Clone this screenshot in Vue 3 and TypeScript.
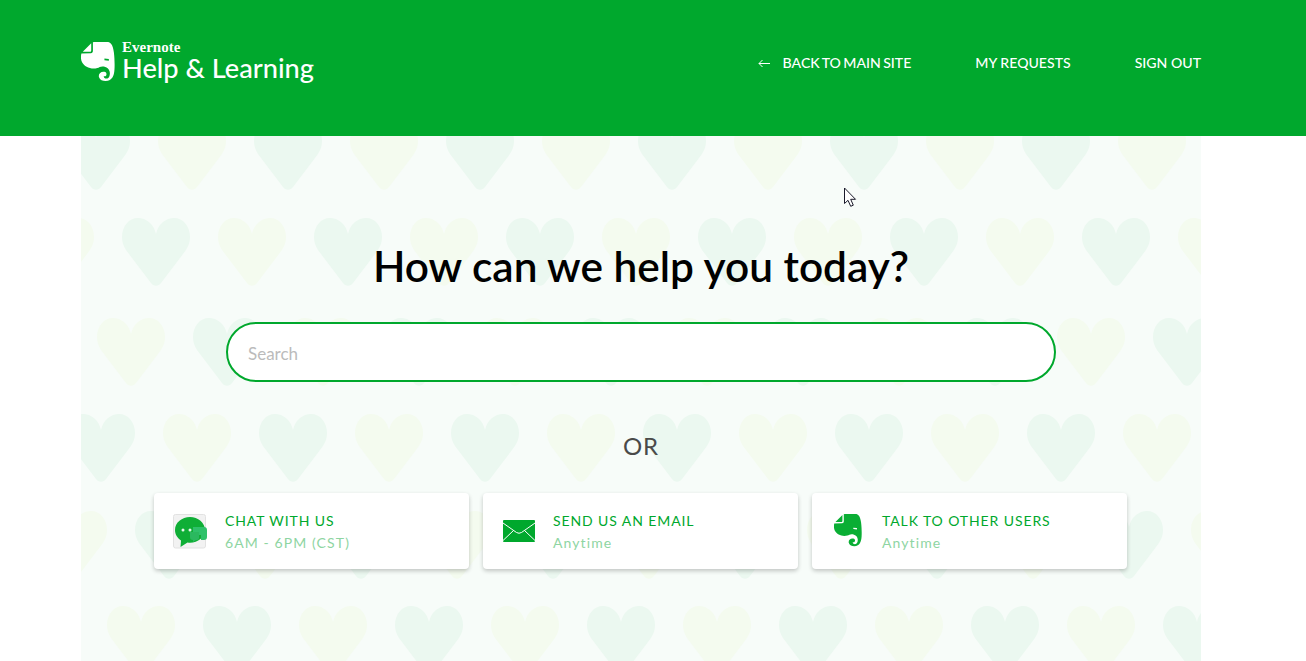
<template>
  <div class="page">
    <header class="top">
      <a class="brand" href="#">
        <svg class="elephant" viewBox="15 18 100 118" width="34" height="40">
          <path fill-rule="evenodd" :d="elephantPath" fill="#fff" />
        </svg>
        <span class="brand-text">
          <span class="brand-small">Evernote</span>
          <span class="brand-big">Help &amp; Learning</span>
        </span>
      </a>
      <nav class="nav">
        <a href="#" class="back">
          <svg width="12" height="9" viewBox="0 0 12 9" fill="none" stroke="#fff" stroke-width="1">
            <path d="M12 4.5H1M4.5 1 1 4.5 4.5 8" />
          </svg>
          Back to main site
        </a>
        <a href="#">My requests</a>
        <a href="#">Sign out</a>
      </nav>
    </header>

    <main class="hero">
      <svg class="hearts" width="1120" height="525" viewBox="81 136 1120 525">
        <path
          v-for="h in hearts"
          :key="h.key"
          :d="heartPath"
          :fill="h.color"
          :transform="`translate(${h.x - 34} ${h.y})`"
        />
      </svg>
      <h1>How can we help you today?</h1>
      <input class="search" type="text" placeholder="Search" />
      <p class="or">OR</p>
      <div class="cards">
        <a v-for="c in cards" :key="c.title" class="card" href="#">
          <span class="icon" :class="c.icon">
            <svg v-if="c.icon === 'chat'" width="35" height="35" viewBox="0 0 35 35">
              <rect x="0.5" y="0.5" width="32" height="33.5" rx="2" fill="#f2f2f2" stroke="#e2e2e2" />
              <path d="M17 3C9 3 2 8.500 2 16c0 4.500 2.500 8 6 10.500L7.500 33l7-4.500c1 .2 1.700.2 2.500.2 8 0 15-5.500 15-12.700S25 3 17 3z" fill="#0fae36" />
              <circle cx="10" cy="16" r="1.500" fill="#e8f7ec" />
              <circle cx="17" cy="16" r="1.500" fill="#e8f7ec" />
              <path d="M20 13h11a3 3 0 0 1 3 3v7a3 3 0 0 1-3 3h-3v-5h-8z" fill="#2fc16a" />
              <path d="M17 18h9v6a2 2 0 0 1-2 2h-1l-3 2v-2a3 3 0 0 1-3-3z" fill="#2bb85f" />
            </svg>
            <svg v-else-if="c.icon === 'mail'" width="32" height="22" viewBox="0 0 32 22">
              <rect width="32" height="22" rx="1" fill="#00a82d" />
              <path d="M0 3 13.500 12.500Q16 14 18.500 12.500L32 3M0 20.500 10.500 10.500M32 20.500 21.500 10.500" fill="none" stroke="#fff" stroke-width="1" />
            </svg>
            <svg v-else class="elephant-green" viewBox="15 18 100 118" width="28" height="33">
              <path fill-rule="evenodd" :d="elephantPath" fill="#0aae34" />
            </svg>
          </span>
          <span class="card-text">
            <span class="card-title">{{ c.title }}</span>
            <span class="card-sub">{{ c.sub }}</span>
          </span>
        </a>
      </div>
    </main>

    <!-- mouse pointer caught in the screenshot -->
    <svg class="pointer" width="15" height="21" viewBox="0 0 15 21">
      <path d="M1.500 1v15.500l3.500-3.200 2.700 6 2.600-1.100-2.600-5.900h4.800z" fill="#fff" stroke="#1a1a2a" stroke-width="1" />
    </svg>
  </div>
</template>

<script setup lang="ts">
interface Card {
  icon: string;
  title: string;
  sub: string;
}
interface Heart {
  key: string;
  x: number;
  y: number;
  color: string;
}

const GREEN = "#ebf8f0";
const YELLOW = "#f4fbef";

const heartPath =
  "M34 16C32 6 24 0 16 0 7 0 0 8 0 19c0 7 3 12 7 17l22 29c2.500 3.500 7.500 3.500 10 0l22-29c4-5 7-10 7-17C68 8 61 0 52 0 44 0 36 6 34 16z";

const elephantPath =
  "M50 19C62 13 95 12 104 24 112 35 114 60 114 85 114 105 113 122 100 130 90 136 72 134 68 122 65 112 74 104 84 106 90 107 92 114 88 118 86 120 84 119 82 118 82 123 85 126 90 126 97 126 100 118 100 110 100 98 90 90 78 90 72 90 68 93 63 95 45 100 25 92 18 78 14 70 14 60 16 52L44 51C48 51 50 48 50 44zM45 22 20 47H41C44 47 45 45 45 42zM84 67v5l13 1v-5z";

const cards: Card[] = [
  { icon: "chat", title: "CHAT WITH US", sub: "6AM - 6PM (CST)" },
  { icon: "mail", title: "SEND US AN EMAIL", sub: "Anytime" },
  { icon: "elephant", title: "TALK TO OTHER USERS", sub: "Anytime" },
];

// the tiled pattern: each row has its own offset, colours alternate every 96px
const rows = [
  { top: 122, x: 96, first: GREEN },
  { top: 218, x: 60, first: YELLOW },
  { top: 318, x: 35, first: GREEN },
  { top: 414, x: 101, first: GREEN },
  { top: 511, x: 73, first: YELLOW },
  { top: 606, x: 45, first: GREEN },
];

const hearts: Heart[] = [];
rows.forEach((row, r) => {
  for (let i = 0; i < 13; i++) {
    hearts.push({
      key: `${r}-${i}`,
      x: row.x + i * 96,
      y: row.top,
      color: i % 2 === 0 ? row.first : row.first === GREEN ? YELLOW : GREEN,
    });
  }
});
</script>

<style>
html,
body {
  margin: 0;
  background: #fff;
}
</style>

<style scoped>
.page {
  position: relative;
  width: 1306px;
  height: 661px;
  overflow: hidden;
  font-family: Lato, "Noto Sans", sans-serif;
}

a {
  color: inherit;
  text-decoration: none;
}

.top {
  height: 136px;
  box-sizing: border-box;
  padding: 42px 105px 0 81px;
  background: #00a82d;
  color: #fff;
  display: flex;
  justify-content: space-between;
  align-items: flex-start;
}

.brand {
  display: flex;
  gap: 7px;
}

.brand-text {
  display: flex;
  flex-direction: column;
}

.brand-small {
  font-family: "Liberation Serif", serif;
  font-size: 15px;
  font-weight: 700;
  line-height: 11px;
}

.brand-big {
  font-family: Lato, sans-serif;
  font-size: 27.2px;
  font-weight: 500;
  line-height: 30px;
  white-space: nowrap;
}

.nav {
  display: flex;
  gap: 64px;
  font-size: 14.1px;
  font-weight: 500;
  line-height: 20px;
  text-transform: uppercase;
  margin-top: 11px;
}

.back {
  word-spacing: -1.2px;
}

.back svg {
  margin-right: 10px;
}

.hero {
  position: relative;
  margin-left: 81px;
  width: 1120px;
  height: 525px;
  overflow: hidden;
  background: #f7fcf9;
  display: flex;
  flex-direction: column;
  align-items: center;
}

.hearts {
  position: absolute;
  left: 0;
  top: 0;
}

h1 {
  position: relative;
  margin: 106px 0 0;
  font-size: 42.4px;
  line-height: 48px;
  font-weight: 600;
  color: #000;
}

.search {
  position: relative;
  display: block;
  box-sizing: border-box;
  width: 830px;
  height: 60px;
  margin-top: 32px;
  padding: 2px 20px 0;
  border: 2px solid #00a82d;
  border-radius: 30px;
  background: #fff;
  outline: none;
  font-family: Lato, sans-serif;
  font-size: 17px;
}

.search::placeholder {
  color: #bbb;
}

.or {
  position: relative;
  margin: 48px 0 0;
  font-size: 24px;
  line-height: 32px;
  letter-spacing: 1px;
  color: #4a4a4a;
}

.cards {
  position: relative;
  display: flex;
  gap: 14px;
  margin: 31px 1px 0 0;
}

.card {
  display: flex;
  align-items: center;
  box-sizing: border-box;
  width: 315px;
  height: 76px;
  padding-left: 19px;
  background: #fff;
  border-radius: 4px;
  box-shadow: 0 2px 4px rgba(0, 0, 0, 0.22);
}

.icon {
  width: 51px;
  display: flex;
}

.icon.chat {
  width: 52px;
}

.icon.mail svg {
  margin-left: 1px;
}

.elephant-green {
  margin: -2px 0 0 3px;
}

.card-text {
  display: flex;
  flex-direction: column;
  font-size: 14px;
  line-height: 22px;
  padding-top: 2px;
}

.card-title {
  color: #00a82d;
  letter-spacing: 0.9px;
}

.card-sub {
  color: #8ed5a2;
  letter-spacing: 1.1px;
}

.pointer {
  position: absolute;
  left: 843px;
  top: 187px;
}
</style>
